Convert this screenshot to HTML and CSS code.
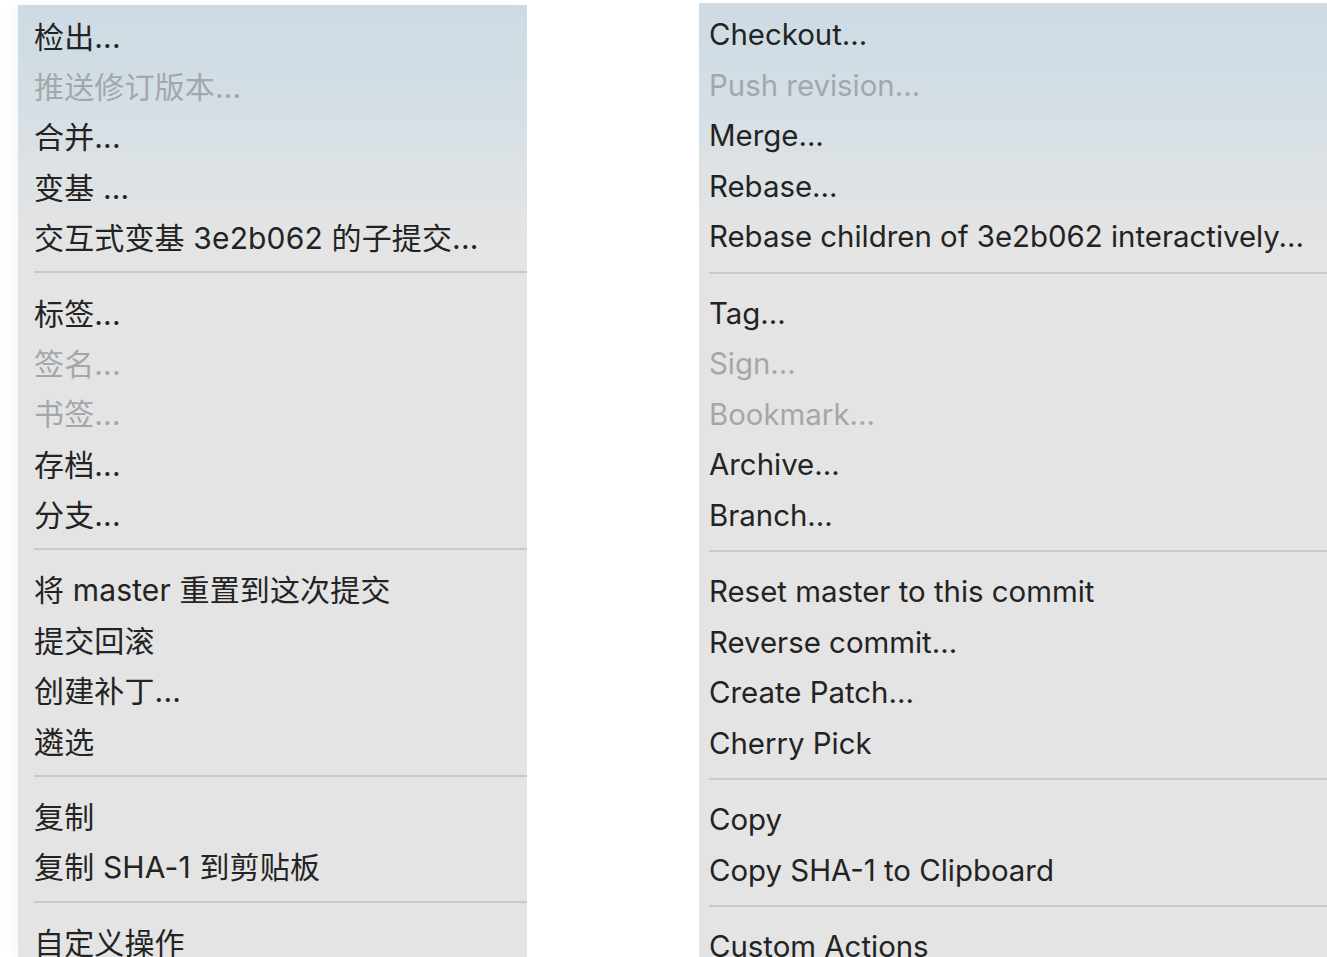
FILE: index.html
```html
<!DOCTYPE html>
<html lang="zh">
<head>
<meta charset="utf-8">
<title>Menu</title>
<link rel="stylesheet" href="styles.css">
</head>
<body>
<div class="stage">
  <div class="menu menu-zh">
    <div class="item">检出...</div>
    <div class="item disabled">推送修订版本...</div>
    <div class="item">合并...</div>
    <div class="item">变基 ...</div>
    <div class="item">交互式变基 3e2b062 的子提交...</div>
    <div class="sep"></div>
    <div class="item">标签...</div>
    <div class="item disabled">签名...</div>
    <div class="item disabled">书签...</div>
    <div class="item">存档...</div>
    <div class="item">分支...</div>
    <div class="sep"></div>
    <div class="item">将 master 重置到这次提交</div>
    <div class="item">提交回滚</div>
    <div class="item">创建补丁...</div>
    <div class="item">遴选</div>
    <div class="sep"></div>
    <div class="item">复制</div>
    <div class="item">复制 SHA-1 到剪贴板</div>
    <div class="sep"></div>
    <div class="item">自定义操作</div>
  </div>
  <div class="menu menu-en">
    <div class="item">Checkout...</div>
    <div class="item disabled">Push revision...</div>
    <div class="item">Merge...</div>
    <div class="item">Rebase...</div>
    <div class="item">Rebase children of 3e2b062 interactively...</div>
    <div class="sep"></div>
    <div class="item">Tag...</div>
    <div class="item disabled">Sign...</div>
    <div class="item disabled">Bookmark...</div>
    <div class="item">Archive...</div>
    <div class="item">Branch...</div>
    <div class="sep"></div>
    <div class="item">Reset master to this commit</div>
    <div class="item">Reverse commit...</div>
    <div class="item">Create Patch...</div>
    <div class="item">Cherry Pick</div>
    <div class="sep"></div>
    <div class="item">Copy</div>
    <div class="item">Copy SHA-1 to Clipboard</div>
    <div class="sep"></div>
    <div class="item">Custom Actions</div>
  </div>
</div>
</body>
</html>
```
FILE: styles.css
```css
html, body {
  margin: 0;
  padding: 0;
  background: #ffffff;
  height: 100%;
  overflow: hidden;
}

.stage {
  display: flex;
  align-items: flex-start;
  height: 957px;
  overflow: hidden;
}

.menu {
  display: flex;
  flex-direction: column;
  background: linear-gradient(to bottom, #cedbe4 0px, #d3dee5 90px, #dde2e5 170px, #e4e4e4 240px, #e4e4e4 100%);
  font-family: Inter, "Noto Sans CJK SC", sans-serif;
  color: #232323;
  box-sizing: border-box;
}

.menu-zh {
  margin-left: 18px;
  margin-top: 5px;
  width: 509px;
  height: 952px;
  padding: 4.5px 0 0 16px;
  font-size: 30px;
  letter-spacing: 0.15px;
  box-shadow: -6px 0 10px rgba(0, 0, 0, 0.03);
}

.menu-en {
  margin-left: 172px;
  margin-top: 3px;
  width: 628px;
  height: 954px;
  padding: 5.3px 0 0 10px;
  font-size: 29.4px;
  letter-spacing: 0;
  border-top: 1px solid #d9dcde;
}

.item {
  display: flex;
  align-items: center;
  white-space: nowrap;
  flex: none;
}

.menu-zh .item { height: 50.35px; }
.menu-en .item { height: 50.5px; }

.item.disabled {
  color: #a3a7aa;
}

.sep {
  flex: none;
  border-bottom: 2px solid #c9c9c9;
  box-sizing: border-box;
  height: 12px;
}

.menu-zh .sep { margin-bottom: 13.2px; }
.menu-en .sep { margin-bottom: 14px; }
```
